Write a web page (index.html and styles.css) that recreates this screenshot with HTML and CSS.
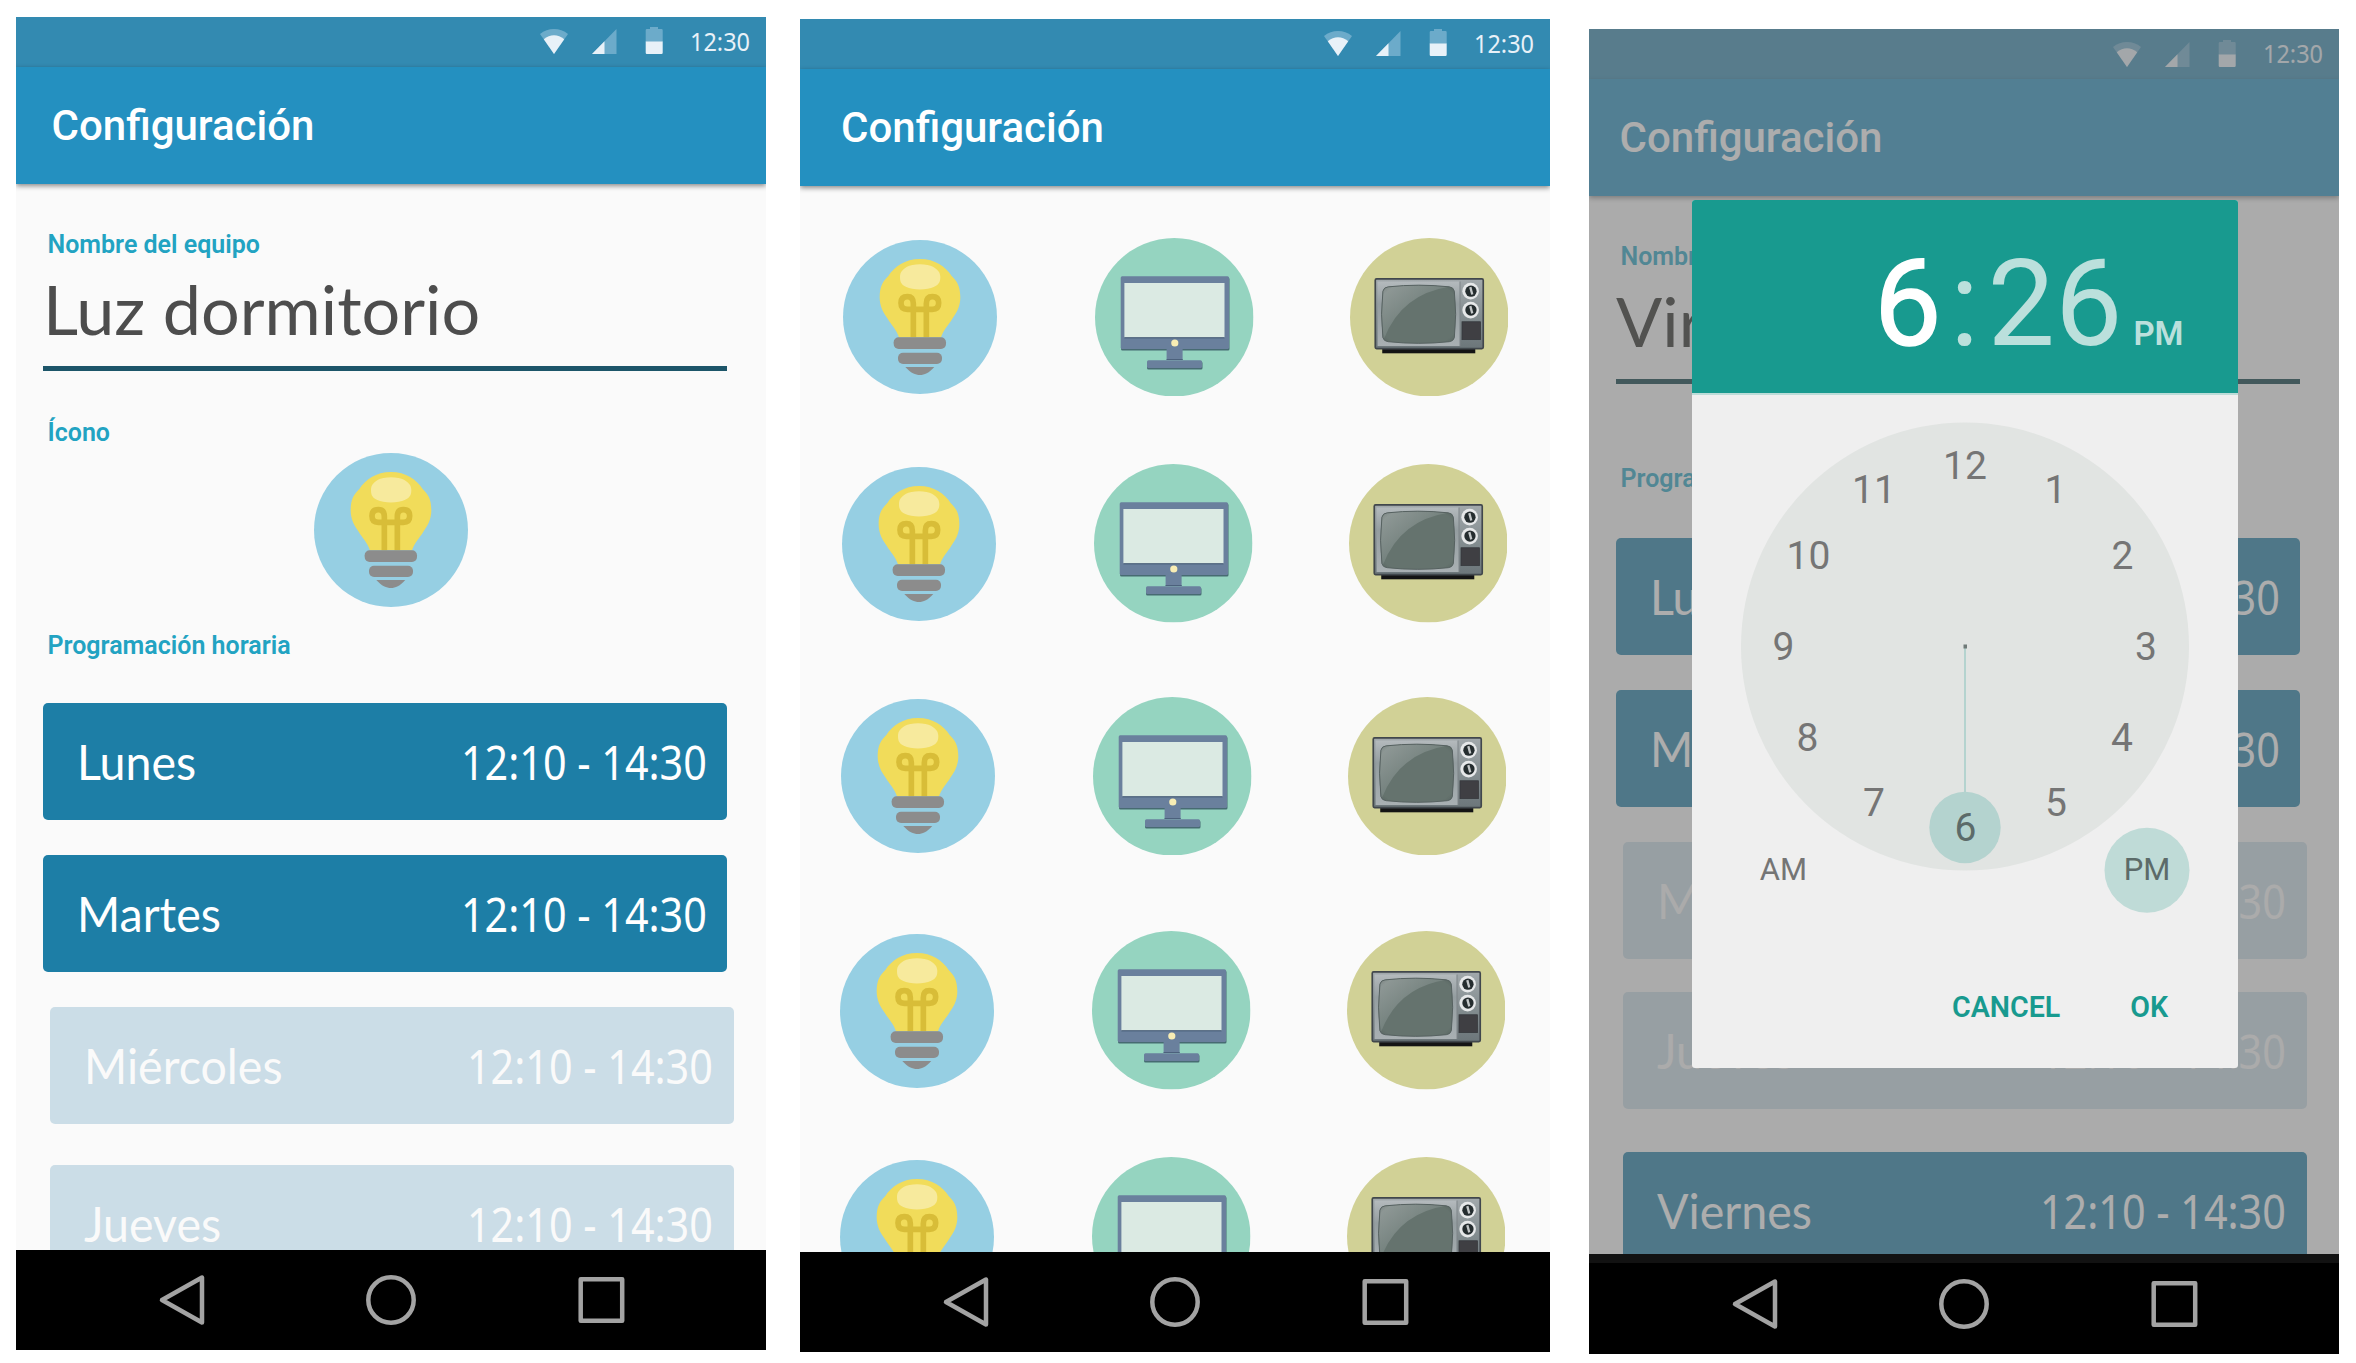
FILE: index.html
```html
<!DOCTYPE html>
<html lang="es">
<head>
<meta charset="utf-8">
<title>Configuración</title>
<link rel="stylesheet" href="styles.css">
</head>
<body>
<svg class="sprite" width="0" height="0" aria-hidden="true">
  <defs>
    <linearGradient id="tv-case" x1="0" y1="0" x2="0" y2="1">
      <stop offset="0" stop-color="#a2a9ac"/><stop offset=".6" stop-color="#7f898c"/><stop offset="1" stop-color="#6c767a"/>
    </linearGradient>
    <linearGradient id="tv-front" x1="0" y1="0" x2="0" y2="1">
      <stop offset="0" stop-color="#b4babd"/><stop offset=".35" stop-color="#949da0"/><stop offset="1" stop-color="#a9b0b3"/>
    </linearGradient>
    <linearGradient id="tv-glare" x1="0" y1="0" x2="1" y2="1">
      <stop offset="0" stop-color="#939c9a"/><stop offset=".6" stop-color="#6f7d79"/>
    </linearGradient>
    <radialGradient id="tv-edge" cx=".5" cy=".5" r=".72">
      <stop offset=".8" stop-color="#3f4a48" stop-opacity="0"/><stop offset="1" stop-color="#3f4a48" stop-opacity=".7"/>
    </radialGradient>
  </defs>
  <symbol id="status" viewBox="0 0 124 27">
    <path fill="#6cabca" d="M0 7C8 .3 20 .3 28 7L14 27Z"/>
    <path fill="#e8f1f8" d="M3.8 12.2C10 7 18 7 24.2 12.2L14 27Z"/>
    <path fill="#6cabca" d="M76.5 2V27H52Z"/>
    <path fill="#e8f1f8" d="M64.5 14.3V27H52Z"/>
    <path fill="#6cabca" d="M110 0h8v2h3.5q1.2 0 1.2 1.2V15h-17V3.200q0-1.200 1.200-1.200h3.100z"/>
    <path fill="#e8f1f8" d="M105.700 14.500h17v11.300q0 1.200-1.200 1.200h-14.600q-1.200 0-1.200-1.200z"/>
  </symbol>
  <symbol id="nav" viewBox="0 0 750 100">
    <g fill="none" stroke="#a3a3a3" stroke-width="4.500" stroke-linejoin="round">
      <path d="M186 27.500V72.500L146 50Z"/>
      <circle cx="375" cy="50" r="22.700"/>
      <rect x="564.700" y="29.300" width="41.500" height="41.500"/>
    </g>
  </symbol>
  <symbol id="bulb" viewBox="14 12 462 462">
    <circle cx="245" cy="243" r="231" fill="#96cfe3"/>
    <path fill="#f1dc5a" d="M182 304C174 280 160 268 148 248C136 232 124 212 124 184C124 150 134 136 150 120C168 92 200 69 245 69C290 69 322 92 340 120C356 136 366 150 366 184C366 212 354 232 342 248C330 268 316 280 308 304Z"/>
    <path fill="#f7ea9d" d="M185 123C185 106 194 101 206 92C222 82 268 82 284 92C296 101 306 106 306 123C306 142 298 147 286 153C268 163 222 163 204 153C192 147 185 142 185 123Z"/>
    <path fill="none" stroke="#d8bd38" stroke-width="17" d="M225 304V203Q225 182 207 182Q188 182 188 201Q188 220 207 220H282Q301 220 301 201Q301 182 282 182Q264 182 264 203V304"/>
    <rect x="166" y="304" width="157" height="35" rx="15" fill="#8c8c8c"/>
    <rect x="179" y="350" width="132" height="34" rx="15" fill="#8c8c8c"/>
    <path fill="#8c8c8c" d="M201 393H288C272 411 258 417 245 417C231 417 217 411 201 393Z"/>
  </symbol>
  <symbol id="monitor" viewBox="0 0 158.500 158.500">
    <circle cx="79.250" cy="79.250" r="79.250" fill="#95d4c0"/>
    <g fill="#476b72">
      <rect x="26" y="39.500" width="108.500" height="73" rx="1.500"/>
      <rect x="52" y="123.500" width="55.500" height="8" rx="1.500"/>
    </g>
    <rect x="25.700" y="38.300" width="108.300" height="72.700" rx="1.500" fill="#6a809d"/>
    <rect x="71.600" y="110" width="16" height="12" fill="#6a809d"/>
    <path stroke="#4c617c" d="M71.600 121.500H87.700"/>
    <rect x="52" y="122.200" width="55" height="7.800" rx="1.500" fill="#6a809d"/>
    <rect x="29.400" y="45" width="100.100" height="54.500" fill="#dbeae3"/>
    <path stroke="#3f556f" d="M29.400 99.800H129.500"/>
    <circle cx="79.800" cy="105" r="3.600" fill="#f8edb4"/>
  </symbol>
  <symbol id="tv" viewBox="5 6 477 477">
    <circle cx="243.500" cy="244.500" r="238.500" fill="#d1d196"/>
    <rect x="102" y="338" width="280" height="15" fill="#141414"/>
    <rect x="81" y="129" width="325" height="210" rx="4" fill="url(#tv-case)" stroke="#41474c" stroke-width="5"/>
    <rect x="88" y="137" width="248" height="194" fill="url(#tv-front)"/>
    <path d="M336 137V331" stroke="#7d8689" stroke-width="3"/>
    <path fill="#65736e" d="M120 153Q212 143 304 153Q316 154 319 166Q327 235 319 306Q316 317 304 318Q212 328 120 318Q107 317 104 306Q96 235 104 166Q107 154 120 153Z"/>
    <path fill="url(#tv-glare)" d="M104 306Q96 235 104 166Q107 154 120 153Q212 143 304 153Q160 175 108 308Z"/>
    <path fill="url(#tv-edge)" stroke="#566160" stroke-width="3" d="M120 153Q212 143 304 153Q316 154 319 166Q327 235 319 306Q316 317 304 318Q212 328 120 318Q107 317 104 306Q96 235 104 166Q107 154 120 153Z" fill-opacity=".600"/>
    <g id="knob">
      <circle cx="368" cy="166" r="25" fill="#e6e8e9"/>
      <circle cx="369" cy="166" r="17" fill="#252d2f"/>
      <path d="M367 154L373 176" stroke="#c4c8c9" stroke-width="7"/>
    </g>
    <use href="#knob" y="57"/>
    <rect x="342" y="258" width="56" height="54" fill="#3f3f43" stroke="#33363a" stroke-width="2"/>
  </symbol>
</svg>

<main class="screens">
  <section class="phone phone-form">
    <div class="status-bar"><svg class="status-icons"><use href="#status"/></svg><span class="clock">12:30</span></div>
    <header class="app-bar">Configuración</header>
    <div class="content">
      <div class="label label-name">Nombre del equipo</div>
      <div class="name"><span>Luz dormitorio</span></div>
      <div class="label label-icon">Ícono</div>
      <svg class="picked"><use href="#bulb"/></svg>
      <div class="label label-plan">Programación horaria</div>
      <div class="days">
        <div class="day"><span class="day-name">Lunes</span><span class="hours">12:10 - 14:30</span></div>
        <div class="day"><span class="day-name">Martes</span><span class="hours">12:10 - 14:30</span></div>
        <div class="day off"><span class="day-name">Miércoles</span><span class="hours">12:10 - 14:30</span></div>
        <div class="day off thu"><span class="day-name">Jueves</span><span class="hours">12:10 - 14:30</span></div>
      </div>
    </div>
    <nav class="nav-bar"><svg><use href="#nav"/></svg></nav>
  </section>

  <section class="phone phone-icons">
    <div class="status-bar"><svg class="status-icons"><use href="#status"/></svg><span class="clock">12:30</span></div>
    <header class="app-bar">Configuración</header>
    <div class="content">
      <div class="icon-row r1"><svg class="bulb"><use href="#bulb"/></svg><svg><use href="#monitor"/></svg><svg><use href="#tv"/></svg></div>
      <div class="icon-row r2"><svg class="bulb"><use href="#bulb"/></svg><svg><use href="#monitor"/></svg><svg><use href="#tv"/></svg></div>
      <div class="icon-row r3"><svg class="bulb"><use href="#bulb"/></svg><svg><use href="#monitor"/></svg><svg><use href="#tv"/></svg></div>
      <div class="icon-row r4"><svg class="bulb"><use href="#bulb"/></svg><svg><use href="#monitor"/></svg><svg><use href="#tv"/></svg></div>
      <div class="icon-row r5"><svg class="bulb"><use href="#bulb"/></svg><svg><use href="#monitor"/></svg><svg><use href="#tv"/></svg></div>
    </div>
    <nav class="nav-bar"><svg><use href="#nav"/></svg></nav>
  </section>

  <section class="phone phone-time">
    <div class="status-bar"><svg class="status-icons"><use href="#status"/></svg><span class="clock">12:30</span></div>
    <header class="app-bar">Configuración</header>
    <div class="content">
      <div class="label label-name">Nombre</div>
      <div class="name"><span>Vir</span></div>
      <div class="label label-plan">Programación</div>
      <div class="days">
        <div class="day"><span class="day-name">Lunes</span><span class="hours">12:10 - 14:30</span></div>
        <div class="day"><span class="day-name">Martes</span><span class="hours">12:10 - 14:30</span></div>
        <div class="day off"><span class="day-name">Miércoles</span><span class="hours">12:10 - 14:30</span></div>
        <div class="day off thu"><span class="day-name">Jueves</span><span class="hours">12:10 - 14:30</span></div>
        <div class="day fri"><span class="day-name">Viernes</span><span class="hours">12:10 - 14:30</span></div>
      </div>
    </div>
    <div class="scrim"></div>
    <nav class="nav-bar"><svg><use href="#nav"/></svg></nav>
    <div class="picker">
      <div class="picker-head"><span class="hour">6</span><span class="colon">:</span><span class="minute">26</span><span class="half">PM</span></div>
      <svg class="dial" viewBox="0 0 546 560">
        <circle cx="273" cy="250.500" r="224" fill="#e1e4e2"/>
        <circle cx="273" cy="431.500" r="35.700" fill="#b4d3cf"/>
        <path d="M273 250V397" stroke="#b4d3cf" stroke-width="2"/>
        <rect x="271.500" y="248.500" width="3.500" height="4" fill="#6f7a78"/>
        <g class="numbers">
          <text x="273" y="83">12</text><text x="363.500" y="107">1</text><text x="430.500" y="173">2</text>
          <text x="454" y="264">3</text><text x="430" y="355">4</text><text x="364" y="420">5</text>
          <text x="273.500" y="445" class="on">6</text><text x="182" y="420">7</text><text x="115.500" y="355">8</text>
          <text x="91.500" y="264">9</text><text x="116.500" y="173">10</text><text x="182" y="107">11</text>
        </g>
        <circle cx="455" cy="474.300" r="42.500" fill="#bfdbd7"/>
        <text class="ampm" x="91.500" y="484">AM</text><text class="ampm on" x="455" y="484">PM</text>
      </svg>
      <div class="actions"><span>CANCEL</span><span>OK</span></div>
    </div>
  </section>
</main>
</body>
</html>
```
FILE: styles.css
```css
* { box-sizing: border-box; }
body { margin: 0; width: 2356px; height: 1363px; overflow: hidden; background: #fff; font-family: Roboto, sans-serif; }
.sprite { position: absolute; }
.screens { display: flex; align-items: flex-start; padding-left: 16px; }
.phone { position: relative; display: flex; flex-direction: column; flex: none; width: 750px; height: 1333.5px; overflow: hidden; background: #fafafa; }
.phone-form { margin-top: 16.5px; }
.phone-icons { margin: 18.5px 39px 0 34px; }
.phone-time { margin-top: 29px; height: 1325px; }

.status-bar { display: flex; flex: none; height: 50px; padding: 10.5px 0 0 523.5px; background: #338ab1; }
.status-icons { width: 124px; height: 27px; }
.clock { margin: -1.5px 0 0 26px; font: 25.5px/30px "Noto Sans", sans-serif; color: #e8f1f8; transform: scaleX(.92); transform-origin: left; }
.app-bar { flex: none; height: 117px; padding: 6px 0 0 35.5px; background: #2490c0; box-shadow: 0 2px 5px rgba(0,0,0,.45); color: #fff; font-size: 42px; font-weight: 500; line-height: 106px; position: relative; }
.phone-icons .app-bar { padding-left: 41px; }
.phone-time .app-bar { padding-left: 30.5px; }
.content { flex: 1; min-height: 0; overflow: hidden; }
.nav-bar { flex: none; height: 100px; background: #000; position: relative; }
.nav-bar svg { display: block; width: 750px; height: 100px; }

.label { padding-left: 31.5px; font-size: 25px; font-weight: 600; line-height: 30px; color: #22a3c2; }
.label-name { margin-top: 46px; }
.name { width: 684px; height: 102.5px; margin: 9px 0 0 27px; border-bottom: 5px solid #1c5569; font: 67px/81px Lato, sans-serif; color: #4d4d4d; }
.name span { display: inline-block; transform: scaleX(1.02); transform-origin: left; }
.label-icon { margin-top: 46.5px; }
.picked { display: block; width: 154px; height: 154px; margin: 5px 0 0 298px; }
.label-plan { margin-top: 24.5px; }
.days { display: flex; flex-direction: column; margin: 41.5px 0 0 27px; }
.day { display: flex; flex: none; justify-content: space-between; width: 684px; height: 117px; margin-bottom: 35px; padding: 0 20.5px 0 34px; border-radius: 5px; background: #1d7ea6; color: #fff; line-height: 117px; }
.day-name { font: 48px/117px Lato, sans-serif; transform: scaleX(.97); transform-origin: left; }
.hours { font: 48px/117px "Noto Sans", sans-serif; transform: scaleX(.86); transform-origin: right; }
.off { margin-left: 6.5px; background: #cbdde7; color: #fafafa; margin-bottom: 41px; }

.icon-row { display: flex; align-items: center; height: 158.5px; }
.icon-row svg { width: 158.5px; height: 158.5px; margin-left: 96px; }
.icon-row .bulb { width: 154px; height: 154px; margin-left: 0; }
.icon-row .bulb + svg { margin-left: 98px; }
.r1 { margin: 52.3px 0 68.1px 43.4px; }
.r2 { margin: 0 0 74px 42.1px; }
.r3 { margin: 0 0 76px 41.1px; }
.r4 { margin: 0 0 67.5px 40.2px; }
.r5 { margin-left: 40.2px; }

.phone-time .name { color: #242420; border-color: #00353c; }
.phone-time .label-plan { margin-top: 80.5px; }
.phone-time .days { margin-top: 43.5px; }
.phone-time .off { margin-bottom: 33px; }
.phone-time .thu { margin-bottom: 43px; }
.fri { margin-left: 6.5px; }
.scrim { position: absolute; inset: 0 0 100px; background: rgba(115,115,115,.584); }
.phone-time .nav-bar { box-shadow: inset 0 9px #121212; }
.picker { position: absolute; left: 103px; top: 171px; width: 546px; height: 868px; display: flex; flex-direction: column; background: #efefef; border-radius: 3px; }
.picker-head { display: flex; align-items: baseline; height: 195px; padding-left: 182px; background: #189a8f; border-bottom: 2px solid #bcdcd8; color: #bbe0dc; font-size: 120px; line-height: 209px; border-radius: 3px 3px 0 0; flex: none; }
.hour { color: #fff; -webkit-text-stroke: 1.5px #fff; }
.colon { padding: 0 8.5px; }
.half { margin-left: 11px; font-size: 33px; font-weight: 600; }
.dial { display: block; width: 546px; height: 560px; flex: none; margin-top: 1px; }
.numbers { font-size: 39px; text-anchor: middle; fill: #757575; }
.ampm { font-size: 31px; text-anchor: middle; fill: #757575; }
.dial .on { fill: #5c6b69; }
.actions { display: flex; gap: 70px; padding-left: 260px; font-size: 28.6px; font-weight: 600; line-height: 34px; margin-top: 34px; color: #189a8f; }
```
